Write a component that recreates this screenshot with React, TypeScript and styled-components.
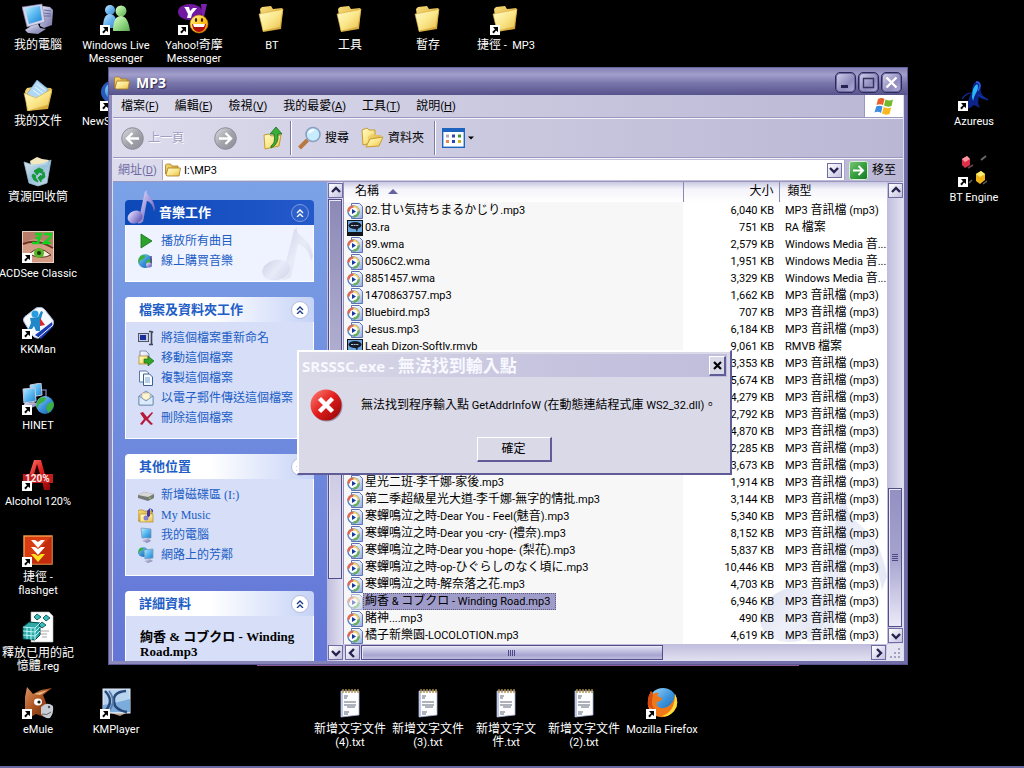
import React from 'react';
import styled, { createGlobalStyle, css } from 'styled-components';

const sans = `Roboto, "Noto Sans CJK TC", "Noto Sans CJK JP", sans-serif`;
const serif = `"Liberation Serif", "Noto Sans CJK TC", "Noto Sans CJK JP", serif`;

const Global = createGlobalStyle`
  * { box-sizing: border-box; }
  html, body { margin: 0; padding: 0; background: #000; }
  body { font-family: ${sans}; font-size: 11px; line-height: 13px; color: #000; }
  button, input { font: inherit; color: inherit; margin: 0; }
  button { padding: 0; border: 0; background: none; }
  svg { display: block; flex: none; }
`;

/* ---------- text ---------- */

const Han = styled.span<{ $size: number }>`
  font-size: ${p => p.$size}px;
  line-height: 1;
`;

/* Ideographs and kana are set one step larger than the Latin text round them. */
function T({ children, size = 12 }: { children: string; size?: number }) {
  const runs = children.split(/([\u2e80-\u9fff\uff00-\uffef]+)/).filter(Boolean);
  return (
    <>
      {runs.map((run, i) =>
        /[\u2e80-\u9fff\uff00-\uffef]/.test(run) ? <Han key={i} $size={size}>{run}</Han> : run,
      )}
    </>
  );
}

/* ---------- drawings ---------- */

const HiddenDefs = styled.svg`
  position: absolute;
  width: 0;
  height: 0;
`;

function Grad({ id, stops, v }: { id: string; stops: string[]; v?: boolean }) {
  return (
    <linearGradient id={id} x1="0" y1="0" x2={v ? 0 : 1} y2="1">
      {stops.map((s, i) => <stop key={i} offset={i / (stops.length - 1)} stopColor={s} />)}
    </linearGradient>
  );
}

function Defs() {
  return (
    <HiddenDefs aria-hidden="true">
      <defs>
        <Grad id="gFolder" stops={['#fffbd0', '#fbe88c', '#e8bc48']} />
        <Grad id="gFolderBack" stops={['#f7dc78', '#cf9c2c']} />
        <Grad id="gScreen" stops={['#bfeeff', '#58b8f0', '#1c7fd0']} />
        <Grad id="gCase" stops={['#f4f4ff', '#a6a6cc', '#7474a4']} />
        <Grad id="gBlue" stops={['#a4dcff', '#3c94dc', '#1858a4']} />
        <Grad id="gBuddyBlue" stops={['#c8e8ff', '#68b4f0', '#3c84cc']} />
        <Grad id="gBuddyGreen" stops={['#e0fcd0', '#98dc88', '#58a850']} />
        <Grad id="gRed" stops={['#ff8478', '#e01c1c', '#8c0404']} />
        <Grad id="gGray" stops={['#dcdce0', '#a4a4ac', '#8c8c94']} />
        <Grad id="gNote" stops={['#f0ecff', '#a098dc', '#4c44a0']} />
        <Grad id="gPaleNote" stops={['#cdd2ea', '#e8ebf7', '#cfd5ec']} />
        <Grad id="gPage" stops={['#ffffff', '#dfe6fa', '#8ca4dc']} />
        <Grad id="gYellow" stops={['#fff8a0', '#ffc820', '#f08808']} />
        <Grad id="gGo" stops={['#7cc878', '#38a040', '#187828']} />
        <Grad id="gBin" stops={['#f4fcff', '#a4d0ec', '#d8f0fc']} />
        <Grad id="gDonkey" stops={['#dc9460', '#a85020', '#5c2408']} />
      </defs>
    </HiddenDefs>
  );
}

const ShortcutMark = () => (
  <g>
    <rect x="0" y="22" width="10" height="10" fill="#fff" />
    <path d="M3 24h5v5l-2-1.6-2.2 3.1-1.6-1.4L5 26.2z" fill="#000" />
  </g>
);

function Big({ children, link }: { children: React.ReactNode; link?: boolean }) {
  return (
    <svg width="32" height="32" viewBox="0 0 32 32" aria-hidden="true">
      {children}
      {link && <ShortcutMark />}
    </svg>
  );
}

const FolderArt = () => (
  <g>
    <path d="M4 6l2-2 9-1 2 3 9-1 1 2-2 19-18 3z" fill="url(#gFolderBack)" />
    <path d="M3 11l21-4 3-1-3 18-17 4z" fill="url(#gFolder)" stroke="#d8ac40" strokeWidth=".6" />
  </g>
);

const ComputerArt = () => (
  <g>
    <path d="M20 3l8 1 3 3-1 15-8 3-4-2z" fill="url(#gCase)" />
    <path d="M22 7l7 1M22 10l7 1M22 13l7 0" stroke="#6868a0" strokeWidth="1" />
    <path d="M0 4l20-3 3 18-18 5z" fill="#d4d4ec" stroke="#7878a8" strokeWidth=".6" />
    <path d="M3 5l15-2 2 14-13 4z" fill="url(#gScreen)" />
    <path d="M9 23l7-2 2 4 6 1-8 5-10-1-3-3z" fill="url(#gCase)" />
  </g>
);

const GlobeArt = ({ x, y, r }: { x: number; y: number; r: number }) => (
  <g transform={`translate(${x} ${y}) scale(${r / 8})`}>
    <circle r="8" fill="url(#gBlue)" />
    <path d="M-5-6q4-2 6 0l-2 3-4 2-2 4q-2-4 2-9zM2-1l5-2q2 4-1 7l-3 3-2-4z" fill="#3cb03c" />
  </g>
);

const art: Record<string, React.ReactNode> = {
  computer: <Big><ComputerArt /></Big>,
  documents: (
    <Big>
      <path d="M3 12l2-3 6-1 18 1 1 4-4 17-21 2z" fill="url(#gFolderBack)" />
      <path d="M15 1l11 9-7 15-14-10z" fill="#b0d8f4" stroke="#7ca8d4" strokeWidth=".6" />
      <path d="M15 5l8 6M13 8l8 6M11 11l8 6" stroke="#e8f8ff" strokeWidth="1" />
      <path d="M2 14l12 5 16-9-4 16-20 6z" fill="url(#gFolder)" stroke="#d8ac40" strokeWidth=".6" />
    </Big>
  ),
  bin: (
    <Big>
      <path d="M8 6l7-4 5 2 7 1-2 5-16 1z" fill="#f4e8c0" />
      <path d="M2 7l9 3 10-1 8-4-4 23-9 3-9-3z" fill="url(#gBin)" stroke="#a8cce4" strokeWidth=".8" opacity=".93" />
      <path d="M12 16l5-3 4 2-1 3-3-1-2 3zM22 17l1 5-4 3v2l-3-4 3-3v2l2-2-1-2zM11 19l3 2-1 1 2 3 1 2-4-2-2-4z" fill="#18983c" stroke="#18983c" />
    </Big>
  ),
  acdsee: (
    <Big link>
      <rect x=".5" y=".5" width="31" height="31" fill="#b87c68" stroke="#e8d0c0" />
      <path d="M1 12q14-9 30 3v16H1z" fill="#d49c84" />
      <path d="M1 13q14-6 30 4" stroke="#6c3424" strokeWidth="2" fill="none" />
      <path d="M7 23q10-10 22 1-10 5-22-1z" fill="#f4f0dc" stroke="#5c3020" />
      <circle cx="17" cy="22" r="5" fill="#58b428" />
      <circle cx="17" cy="22" r="2" fill="#143808" />
      <path d="M13 3h6l-1.500 4h-4h4L16 12h-6M22 3h7l-1 4-6 5h7" stroke="#10d420" strokeWidth="2.400" fill="none" />
    </Big>
  ),
  kkman: (
    <Big link>
      <path d="M14 1q6-2 9 2l8 10q2 5-3 8l-9 9q-5 3-9-2L2 15q-2-4 3-7z" fill="#f4f8ff" stroke="#a8b8dc" />
      <path d="M13 28L30 15l1 5-12 12z" fill="#1c3cb4" />
      <path d="M16 31l15-13" stroke="#fff" strokeWidth="1" />
      <circle cx="13" cy="7" r="3.500" fill="#289cdc" />
      <path d="M8 11l8-1 3-6 2 1-3 10v9h-4l-2-5-4 6-2-2 3-7z" fill="#2088c8" />
      <path d="M18 11l5 7-5 1z" fill="#d42828" />
    </Big>
  ),
  hinet: (
    <Big link>
      <path d="M8 2l11-2 1 12-11 2z" fill="url(#gScreen)" stroke="#c8c8e0" />
      <path d="M1 6l12-1 1 13-12 2z" fill="url(#gScreen)" stroke="#c8c8e0" />
      <path d="M3 20l9-1 5 3-8 3-8-2z" fill="url(#gCase)" />
      <path d="M20 7h4v8" stroke="#7070a0" strokeWidth="1.500" fill="none" />
      <GlobeArt x={23} y={22} r={9} />
    </Big>
  ),
  alcohol: (
    <Big link>
      <path d="M12 1h7l6 22 3 2v6h-6l-2-10h-8l-3 7H3l2-5z" fill="url(#gRed)" />
      <path d="M15 5l-3 10h6z" fill="#200" />
      <rect x="1" y="15" width="30" height="9" fill="#c01c1c" />
      <text x="3" y="23" fontSize="10" fontWeight="700" fontFamily="Roboto, sans-serif" fill="#ffe8e8">120%</text>
    </Big>
  ),
  flashget: (
    <Big link>
      <rect x="2" y="1" width="28" height="28" fill="#d83c10" stroke="#f8a050" strokeWidth="1.400" />
      <path d="M2 29L30 1v28z" fill="#b42008" opacity=".6" />
      <path d="M9 5h4l3 2 3-2h4l-7 8zM9 12h4l3 2 3-2h4l-7 8z" fill="#fff" />
      <path d="M9 19h4l3 2 3-2h4l-7 8z" fill="#ffe020" />
    </Big>
  ),
  reg: (
    <Big>
      <path d="M9 1h18l4 4v26H9z" fill="#fff" stroke="#b8b8b8" strokeWidth=".6" />
      <path d="M19 20h8M18 23h7M20 26h5" stroke="#a8a8a8" />
      <path d="M1 16l6-5 11 1v12l-5 5-12-1z" fill="#30a8a8" stroke="#044" />
      <path d="M1 16l12 1 5-5M13 17v12M1 20l12 1 5-5M1 24l12 1 5-5M5 16v12M9 17v12" stroke="#c4fcfc" fill="none" strokeWidth=".9" />
      <path d="M15 3l4 3-4 3-3-3zM24 4l4 3-4 3-3-3zM20 11l4 3-4 3-3-3z" fill="#38bcbc" stroke="#044" strokeWidth=".8" />
    </Big>
  ),
  emule: (
    <Big link>
      <path d="M3 10L5 0l6 7 8-4 11-2-9 7 4 10-3 12-8-3-7 4-4-7z" fill="url(#gDonkey)" />
      <path d="M12 7l14-4-8 5z" fill="#e8b888" />
      <ellipse cx="16" cy="15" rx="4" ry="3.400" fill="#fff" />
      <circle cx="17" cy="15" r="1.600" fill="#111" />
      <path d="M19 20q6-6 12-1 1 7-3 12-5 1-9-4z" fill="#c8ccd4" />
      <circle cx="27" cy="20" r="1.200" fill="#555" />
      <path d="M20 27q5 2 9-2" stroke="#666" fill="none" />
    </Big>
  ),
  kmplayer: (
    <Big link>
      <path d="M8 25l20 0-8 4z" fill="#b8a088" />
      <rect x="3" y="2" width="27" height="24" fill="#b8d4ee" stroke="#e4ecf8" />
      <path d="M3 25h27V12q-14 4-27 6z" fill="#7cacdc" />
      <path d="M5 4q10 10 0 20M26 4q-13 1-12 10 0 9 13 11" stroke="#284878" strokeWidth="2.400" fill="none" />
      <path d="M9 4q8 10 0 20" stroke="#587ca8" strokeWidth="1.600" fill="none" />
    </Big>
  ),
  wlm: (
    <Big link>
      <circle cx="10" cy="7" r="5" fill="url(#gBuddyBlue)" />
      <path d="M3 25q0-14 7-14t7 14z" fill="url(#gBuddyBlue)" />
      <circle cx="21" cy="8" r="5.500" fill="url(#gBuddyGreen)" />
      <path d="M13 28q0-15 8-15 7 0 9 15z" fill="url(#gBuddyGreen)" />
    </Big>
  ),
  yahoo: (
    <Big link>
      <ellipse cx="12" cy="9" rx="12" ry="8" fill="#7018a0" />
      <path d="M23 1h6l-3 13h-2z" fill="#7c20b0" />
      <path d="M6 4h5l1 4 3-3h4l-5 6-1 4H9l1-4-3-6z" fill="#fff" />
      <circle cx="21" cy="21" r="9" fill="url(#gYellow)" stroke="#c87808" strokeWidth=".6" />
      <ellipse cx="18" cy="17" rx="1.200" ry="2" fill="#402000" />
      <ellipse cx="24" cy="17" rx="1.200" ry="2" fill="#402000" />
      <path d="M14 21h14q-1 8-7 8t-7-8z" fill="#b01010" />
      <path d="M15 21h12l-1 3H16z" fill="#fff" />
    </Big>
  ),
  folder: <Big><FolderArt /></Big>,
  folderLink: <Big link><FolderArt /></Big>,
  news: (
    <Big link>
      <circle cx="12" cy="13" r="11" fill="#2858b8" />
      <circle cx="13" cy="12" r="8" fill="url(#gBlue)" />
    </Big>
  ),
  azureus: (
    <Big link>
      <path d="M8 30q2-10 6-17 0-9 5-11 4 0 4 6-2 6 5 12l2 1-6-1-3-2q-2 6 1 11l-6-3-4 3z" fill="#0c2488" />
      <path d="M14 18q0-10 5-13 2 2 0 7-3 5-4 10z" fill="#28b8f8" />
      <path d="M18 3q4 0 4 4l-2 5" stroke="#3860e8" fill="none" strokeWidth="1.400" />
      <path d="M4 20q4-6 9-6M20 16q6 2 10 5" stroke="#1434b0" fill="none" strokeWidth="1.200" />
    </Big>
  ),
  bt: (
    <Big link>
      <path d="M4 4l5-3 3 3v6l-5 3-3-3z" fill="#dc3048" />
      <path d="M4 4l5-3 3 3-5 3z" fill="#ff98a4" />
      <path d="M10 13l5-3" stroke="#684048" strokeWidth="2" />
      <path d="M18 19l5-3 4 3v6l-5 4-4-3z" fill="#f0b418" />
      <path d="M18 19l5-3 4 3-5 3z" fill="#fff070" />
      <path d="M23 5l5-4" stroke="#686868" strokeWidth="2" />
      <path d="M11 28l3-3M25 29l4-3" stroke="#606060" strokeWidth="1.500" />
    </Big>
  ),
  text: (
    <Big>
      <path d="M7 4h18v24l-18 2z" fill="#fdfdff" stroke="#a8b0d0" strokeWidth=".8" />
      <path d="M7 4v26l2-1V5z" fill="#c0c8e8" />
      <path d="M9 2v4M12 2v4M15 2v4M18 2v4M21 2v4M24 2v4" stroke="#b09048" strokeWidth="1.400" />
      <path d="M10 9h4M10 11h3M10 15h12M10 18h12M13 20h8M10 25h5M10 27h4" stroke="#606878" strokeWidth="1" />
    </Big>
  ),
  firefox: (
    <Big link>
      <circle cx="17" cy="15" r="14" fill="url(#gBlue)" />
      <path d="M29 7q5 10-1 17-6 7-14 6Q4 29 2 19q-1-8 3-15l2 3q3-2 6-1l-2 3 5 2q0 3-5 4-1 5 4 6 5 1 9-3 5-5 5-11z" fill="#f07818" />
      <path d="M29 7q5 10-1 17-6 7-12 5 13-4 13-22z" fill="#ffdc38" />
      <path d="M2 19q-1-8 3-15l2 3-1 6q-1 6 4 11z" fill="#d84c10" />
    </Big>
  ),
};

function Small({ children, size = 16 }: { children: React.ReactNode; size?: number }) {
  return <svg width={size} height={size} viewBox="0 0 16 16" aria-hidden="true">{children}</svg>;
}

const SmallFolder = () => (
  <Small>
    <path d="M.500 12V3l1-1h4l1.500 2h6v3H4z" fill="url(#gFolderBack)" stroke="#a87c20" strokeWidth=".8" />
    <path d="M1 13l2-7h12.500l-1.500 8H2z" fill="url(#gFolder)" stroke="#a87c20" strokeWidth=".8" />
  </Small>
);

const small: Record<string, React.ReactNode> = {
  play: <Small><path d="M3 1l11 7-11 7z" fill="#2ca42c" stroke="#146c18" strokeWidth=".8" /></Small>,
  shop: (
    <Small>
      <GlobeArt x={7} y={8} r={7} />
      <path d="M13 3v8" stroke="#503c98" strokeWidth="1.400" />
      <ellipse cx="11" cy="12" rx="3" ry="2.500" fill="url(#gNote)" />
    </Small>
  ),
  rename: (
    <Small>
      <rect x=".5" y="3.500" width="10" height="8" fill="#c8ccdc" stroke="#505468" />
      <rect x="2" y="5" width="6" height="5" fill="#18309c" />
      <path d="M11 1.500h2l1 1 1-1M13.500 2v12M11 14.500h4" stroke="#404458" fill="none" strokeWidth="1.600" />
    </Small>
  ),
  move: (
    <Small>
      <path d="M2 1h6l3 3v8H2z" fill="url(#gPage)" stroke="#7078a0" strokeWidth=".8" />
      <rect x="1" y="6" width="9" height="8" fill="url(#gFolder)" stroke="#a88020" strokeWidth=".7" />
      <path d="M6 9h4V6l6 5-6 5v-3H6z" fill="#30a428" stroke="#146010" strokeWidth=".6" />
    </Small>
  ),
  copy: (
    <Small>
      <path d="M1.500 1h7l2 2v9h-9z" fill="#fff" stroke="#5878a8" />
      <path d="M5.500 4h6l3 3v8.500h-9z" fill="#f4faff" stroke="#3c6090" />
      <path d="M7 8h5M7 10h5M7 12h5" stroke="#78a4d4" />
    </Small>
  ),
  mail: (
    <Small>
      <path d="M1 6l7-5 7 5v9H1z" fill="#b8d4f0" stroke="#6888b0" strokeWidth=".8" />
      <path d="M4 3h8v7H4z" fill="#fff4d0" stroke="#b09860" strokeWidth=".5" />
      <path d="M1 6l7 5 7-5v9H1z" fill="#dcecfc" stroke="#6888b0" strokeWidth=".8" />
    </Small>
  ),
  remove: <Small><path d="M2 3l3-1 4 5 5-5 1 1-5 6 5 5-2 1-5-5-4 5-2-1 4-5z" fill="#b81838" /></Small>,
  disk: (
    <Small>
      <path d="M0 8l6-3 10 2v4l-6 3-10-3z" fill="#787878" />
      <path d="M0 8l6-3 10 2-6 3z" fill="#d8d8d8" />
      <circle cx="12" cy="11" r="1" fill="#7c4" />
    </Small>
  ),
  music: (
    <Small>
      <path d="M0 4l1-1h4l1 1h8v10H0z" fill="url(#gFolderBack)" stroke="#a07818" strokeWidth=".6" />
      <rect x="2" y="7" width="13" height="8" fill="url(#gFolder)" stroke="#a88020" strokeWidth=".6" />
      <path d="M12 1v8l-3 2V4zM12 1l3 2v3" fill="#40389c" />
      <circle cx="8" cy="11" r="2.500" fill="#8880d0" />
    </Small>
  ),
  pc: (
    <Small>
      <path d="M3 1l10 1v9L4 11z" fill="url(#gScreen)" stroke="#8098c0" strokeWidth=".8" />
      <path d="M7 11h3l3 3-4 2-5-2z" fill="url(#gCase)" />
    </Small>
  ),
  net: (
    <Small>
      <GlobeArt x={5} y={5} r={5} />
      <path d="M6 3l9-1v9l-8 1z" fill="url(#gScreen)" stroke="#8098c0" strokeWidth=".8" />
      <path d="M9 12h3l3 2-5 2-4-2z" fill="url(#gCase)" />
    </Small>
  ),
  audio: (
    <Small>
      <path d="M4.500.5h8l3 3v12h-11z" fill="url(#gPage)" stroke="#5c74b4" />
      <circle cx="6.500" cy="8.500" r="5.500" fill="#f8fcff" stroke="#5c84c4" strokeWidth="1.400" />
      <path d="M1.500 8.500a5 5 0 0 1 5-5" stroke="#e06850" strokeWidth="2.400" fill="none" />
      <path d="M6.500 3.500a5 5 0 0 1 5 5" stroke="#f0d060" strokeWidth="1.800" fill="none" />
      <path d="M6.500 13.500a5 5 0 0 0 5-5" stroke="#68b058" strokeWidth="2.400" fill="none" />
      <path d="M5 6l4 2.500L5 11z" fill="#1838a0" />
    </Small>
  ),
  real: (
    <Small>
      <rect width="16" height="16" fill="#101418" />
      <rect x="1" y="1" width="14" height="11" fill="#6ca8e0" />
      <ellipse cx="8" cy="5.500" rx="6.500" ry="3.500" fill="#181c28" />
      <path d="M8 8l3 0-1 4z" fill="#181c28" />
      <path d="M4 5.500h8" stroke="#b8c8d8" strokeDasharray="2 .600" />
    </Small>
  ),
};

const Note = ({ w, h, fill }: { w: number; h: number; fill: string }) => (
  <svg width={w} height={h} viewBox="0 0 52 54" preserveAspectRatio="none" aria-hidden="true">
    <path d="M36 0q-1 5 4 9 10 7 12 20l-2 5q-2-13-13-17L30 50q-5 4-10 3l4-14L33 3z" fill={fill} />
    <ellipse cx="15" cy="43" rx="14" ry="10" transform="rotate(-14 15 43)" fill={fill} />
  </svg>
);

const Chevron = ({ dir }: { dir: 'up' | 'down' | 'left' | 'right' }) => {
  const d = { up: 'M1 6l4-4 4 4', down: 'M1 3l4 4 4-4', left: 'M6 1L2 5l4 4', right: 'M3 1l4 4-4 4' }[dir];
  return (
    <svg width="10" height="10" viewBox="0 0 10 10" aria-hidden="true">
      <path d={d} fill="none" stroke="#25234f" strokeWidth="2.400" />
    </svg>
  );
};

/* ---------- desktop ---------- */

const Desktop = styled.main`
  position: relative;
  min-height: 100vh;
  overflow: hidden;
  background: #000;
  border-bottom: 2px solid #6c6aa4;
`;

const IconGrid = styled.div`
  display: grid;
  grid-template-columns: repeat(13, 78px);
  grid-auto-rows: 76px;
  margin-left: -1px;
`;

const Shortcut = styled.button<{ $col: number; $row: number; $start?: boolean }>`
  grid-column: ${p => p.$col + 1};
  grid-row: ${p => p.$row + 1};
  display: flex;
  flex-direction: column;
  align-items: center;
  gap: 4px;
  padding-top: 3px;
  color: #fff;
  white-space: pre;
  text-align: center;
  ${p => p.$start && css`
    span { align-self: flex-start; margin-left: 5px; }
  `}
`;

type Item = [string, string, number, number];
const shortcuts: Item[] = [
  ['computer', '我的電腦', 0, 0],
  ['wlm', 'Windows Live\nMessenger', 1, 0],
  ['yahoo', 'Yahoo!奇摩\nMessenger', 2, 0],
  ['folder', 'BT', 3, 0],
  ['folder', '工具', 4, 0],
  ['folder', '暫存', 5, 0],
  ['folderLink', '捷徑 -  MP3', 6, 0],
  ['documents', '我的文件', 0, 1],
  ['news', 'NewS', 1, 1],
  ['azureus', 'Azureus', 12, 1],
  ['bin', '資源回收筒', 0, 2],
  ['bt', 'BT Engine', 12, 2],
  ['acdsee', 'ACDSee Classic', 0, 3],
  ['kkman', 'KKMan', 0, 4],
  ['hinet', 'HINET', 0, 5],
  ['alcohol', 'Alcohol 120%', 0, 6],
  ['flashget', '捷徑 -\nflashget', 0, 7],
  ['reg', '釋放已用的記\n憶體.reg', 0, 8],
  ['emule', 'eMule', 0, 9],
  ['kmplayer', 'KMPlayer', 1, 9],
  ['text', '新增文字文件\n(4).txt', 4, 9],
  ['text', '新增文字文件\n(3).txt', 5, 9],
  ['text', '新增文字文\n件.txt', 6, 9],
  ['text', '新增文字文件\n(2).txt', 7, 9],
  ['firefox', 'Mozilla Firefox', 8, 9],
];

/* ---------- explorer window ---------- */

const Explorer = styled.section`
  position: absolute;
  inset: 67px 116px 101px 108px;
  display: flex;
  flex-direction: column;
  overflow: hidden;
  border: solid #5b5894;
  border-width: 0 1px 1px;
  background: linear-gradient(90deg, #8c89bc, #6f6ca6);
`;

const BehindEdge = styled.div`
  position: absolute;
  left: 257px;
  right: 225px;
  bottom: 100px;
  height: 1px;
  background: #8a5a9c;
`;

const Caption = styled.header`
  display: flex;
  align-items: center;
  gap: 6px;
  height: 28px;
  padding: 2px 5px 0;
  border-top: 1px solid #66639c;
  background: linear-gradient(#8683b6, #a19ecb 25%, #7a77ad 55%, #56538c);
  color: #fff;
`;

const CaptionText = styled.h1`
  flex: 1;
  margin: 0;
  font: 700 14px/20px "Open Sans", sans-serif;
  text-shadow: 1px 1px 1px #2c2a58;
`;

const CaptionButton = styled.button`
  display: grid;
  place-items: center;
  width: 21px;
  height: 21px;
  margin-left: -4px;
  border: 1px solid #2c2a58;
  border-radius: 5px;
  box-shadow: inset 0 0 0 1px #6c69a0;
  background: linear-gradient(135deg, #d4d2ec, #8f8cbe 60%, #b3b0da);
`;

const Frame = styled.div`
  flex: 1;
  min-height: 0;
  display: flex;
  flex-direction: column;
  margin: 0 3px 3px;
  border: solid #dddcf0;
  border-width: 0 1px 0;
`;

const bar = css`
  display: flex;
  align-items: center;
  flex: none;
  background: linear-gradient(90deg, #dddced, #cbcae0 45%, #b9b7d4);
`;

const MenuBar = styled.nav`
  ${bar}
  height: 23px;
  border-bottom: 1px solid #9997bf;
`;

const MenuButton = styled.button`
  padding: 0 8px;
  height: 22px;
`;

const FlagBox = styled.div`
  display: grid;
  place-items: center;
  align-self: stretch;
  width: 39px;
  margin-left: auto;
  background: #fff;
  border-left: 1px solid #9997bf;
`;

const ToolBar = styled.div`
  ${bar}
  height: 40px;
  padding: 0 8px;
  border-top: 1px solid #f4f4fb;
  border-bottom: 1px solid #9997bf;
`;

const Tool = styled.button<{ $off?: boolean; $w: number }>`
  display: flex;
  align-items: center;
  gap: 4px;
  width: ${p => p.$w}px;
  flex: none;
  ${p => p.$off && css`
    color: #a09ec4;
    text-shadow: 1px 1px 0 #fff;
  `}
`;

const Divider = styled.div`
  width: 2px;
  height: 34px;
  margin-right: 6px;
  border-left: 1px solid #7f7caa;
  border-right: 1px solid #fff;
`;

const AddressBar = styled.form`
  ${bar}
  height: 24px;
  padding: 0 7px 0 5px;
  border-top: 1px solid #f4f4fb;
  border-bottom: 1px solid #9997bf;
  label { width: 44px; color: #6f6ca4; }
`;

const AddressBox = styled.div`
  flex: 1;
  display: flex;
  align-items: center;
  gap: 3px;
  height: 20px;
  padding: 0 2px;
  background: #fff;
  border: solid #a9a7cb;
  border-width: 0 1px;
  input { flex: 1; min-width: 0; padding: 0; border: 0; outline: 0; background: none; }
`;

const GoButton = styled.button`
  display: flex;
  align-items: center;
  gap: 4px;
  margin-left: 4px;
`;

const Body = styled.div`
  flex: 1;
  min-height: 0;
  display: flex;
`;

/* ---------- scroll bars ---------- */

const ScrollBar = styled.div<{ $h?: boolean }>`
  flex: none;
  display: flex;
  flex-direction: ${p => (p.$h ? 'row' : 'column')};
  ${p => (p.$h ? 'height: 17px' : 'width: 16px')};
  padding: 1px;
  gap: 1px;
  background: linear-gradient(${p => (p.$h ? '180deg' : '90deg')}, #bfbddc, #e2e1f1);
`;

const ScrollButton = styled.button`
  display: grid;
  place-items: center;
  flex: none;
  width: 15px;
  height: 15px;
  border: 1px solid #6f6ca4;
  background: linear-gradient(135deg, #fff, #c3c1e0);
`;

const Thumb = styled.div`
  display: grid;
  place-items: center;
  border: 1px solid #504d88;
  box-shadow: inset 1px 1px 0 #e8e8f8;
`;

const SideThumb = styled(Thumb)`flex: 0 1 380px; background: linear-gradient(180deg, #8c89b6, #d8d7eb 85%);`;
const ListThumb = styled(Thumb)`flex: 0 0 139px; background: linear-gradient(180deg, #9390c2, #a5a3cd 50%, #eceaf7);`;
const WideThumb = styled(Thumb)`flex: 0 1 302px; background: linear-gradient(180deg, #e4e3f4, #a7a5d0 70%, #bdbbdc);`;
const Space = styled.div`flex: 1;`;

const Grip = ({ turn }: { turn?: boolean }) => (
  <svg width="8" height="8" viewBox="0 0 8 8" aria-hidden="true">
    <path d={turn ? 'M.5 1v6M2.500 1v6M4.500 1v6M6.500 1v6' : 'M1 .5h6M1 2.500h6M1 4.500h6M1 6.500h6'} stroke="#4c4984" />
  </svg>
);

/* ---------- task pane ---------- */

const TaskPane = styled.aside`
  flex: none;
  display: flex;
  flex-direction: column;
  gap: 15px;
  width: 214px;
  padding: 18px 13px 0 12px;
  overflow: hidden;
  background: linear-gradient(#7ba2e7, #6375d6);
  font-family: ${serif};
  font-size: 12px;
`;

const Panel = styled.section`
  flex: none;
`;

const PanelHead = styled.header<{ $main?: boolean }>`
  display: flex;
  align-items: center;
  height: 25px;
  padding: 0 5px 0 ${p => (p.$main ? 2 : 14)}px;
  border-radius: 4px 4px 0 0;
  color: ${p => (p.$main ? '#fff' : '#215dc6')};
  background: ${p => (p.$main ? 'linear-gradient(90deg, #0c48b8, #2459ca)' : 'linear-gradient(90deg, #fff 45%, #c6d3f7)')};
  h2 { flex: 1; margin: 0; font-size: 12px; line-height: 16px; font-weight: 700; }
`;

const HeadNote = styled.div`
  width: 32px;
  margin-top: -12px;
`;

const Fold = styled.button<{ $main?: boolean }>`
  display: grid;
  place-items: center;
  width: 18px;
  height: 18px;
  border-radius: 50%;
  border: 1px solid ${p => (p.$main ? '#7c9ce4' : '#b4bcdc')};
  background: ${p => (p.$main ? '#2c5fc8' : '#fff')};
  color: ${p => (p.$main ? '#fff' : '#1c3c8c')};
`;

const PanelBody = styled.div<{ $main?: boolean }>`
  position: relative;
  padding: 6px 0 10px 12px;
  border: 1px solid #fff;
  border-top: 0;
  background: ${p => (p.$main ? '#eff3ff' : '#d6dff7')};
`;

const TaskLink = styled.a`
  position: relative;
  z-index: 1;
  display: flex;
  align-items: center;
  gap: 7px;
  height: 20px;
  color: #215dc6;
  text-decoration: none;
  white-space: nowrap;
`;

const PanelMark = styled.div`
  position: absolute;
  right: 0;
  bottom: 0;
`;

const Details = styled.div`
  height: 60px;
  padding: 7px 4px 0 2px;
  font-weight: 700;
  font-size: 13px;
  line-height: 15px;
`;

function TaskPanel({ title, items, main, children }: {
  title: string; items?: [string, string][]; main?: boolean; children?: React.ReactNode;
}) {
  return (
    <Panel>
      <PanelHead $main={main}>
        {main && <HeadNote><Note w={28} h={34} fill="url(#gNote)" /></HeadNote>}
        <h2><T size={13}>{title}</T></h2>
        <Fold $main={main} aria-label={`收合${title}`}>
          <svg width="8" height="8" viewBox="0 0 8 8" aria-hidden="true">
            <path d="M1 4l3-3 3 3M1 8l3-3 3 3" fill="none" stroke="currentColor" strokeWidth="1.400" />
          </svg>
        </Fold>
      </PanelHead>
      <PanelBody $main={main}>
        {main && <PanelMark><Note w={52} h={54} fill="url(#gPaleNote)" /></PanelMark>}
        {items?.map(([icon, label]) => (
          <TaskLink key={label} href="#">{small[icon]}<span><T>{label}</T></span></TaskLink>
        ))}
        {children}
      </PanelBody>
    </Panel>
  );
}

/* ---------- file list ---------- */

const ListPane = styled.div`
  flex: 1;
  min-width: 0;
  display: flex;
  flex-direction: column;
`;

const ListRow = styled.div`
  flex: 1;
  min-height: 0;
  display: flex;
`;

const ListView = styled.div`
  position: relative;
  flex: 1;
  min-width: 0;
  overflow: hidden;
  background: #fff;
  border-left: 1px solid #9290bb;
`;

const ListMark = styled.div`
  position: absolute;
  right: 0;
  bottom: 0;
  opacity: 0.7;
`;

const Files = styled.table`
  position: relative;
  width: 100%;
  table-layout: fixed;
  border-collapse: collapse;
  th, td { padding: 0; overflow: hidden; white-space: nowrap; font-weight: 400; text-align: left; }
  th {
    height: 20px;
    padding: 0 0 1px 8px;
    border-left: 1px solid #8a88b4;
    background: linear-gradient(#c9c8e2, #f3f3fa 35%, #fff);
  }
  th:first-child { padding-left: 11px; border-left: 0; }
  td { height: 17px; line-height: 17px; }
  td:first-child { background: #f7f7f7; }
  td:last-child { padding-left: 6px; }
  th.size, td.size { text-align: right; padding-right: 5px; }
`;

const NameCell = styled.div`
  display: flex;
  height: 17px;
  align-items: center;
  padding-left: 3px;
`;

const FileName = styled.span<{ $on?: boolean }>`
  height: 17px;
  padding: 0 2px;
  ${p => p.$on && css`
    padding-right: 6px;
    background: #9f9cca;
    outline: 1px dotted #5c5a78;
    outline-offset: -1px;
  `}
`;

const IconSlot = styled.span<{ $on?: boolean }>`
  opacity: ${p => (p.$on ? 0.5 : 1)};
`;

const SortMark = styled.svg`
  display: inline-block;
  margin-left: 9px;
  vertical-align: 1px;
`;

const Corner = styled.div`
  display: grid;
  place-items: center;
  flex: none;
  width: 16px;
  background: #e4e3f1;
`;

const HBar = styled.div`
  display: flex;
  flex: none;
`;

const HScroll = styled(ScrollBar)`flex: 1; min-width: 0; padding-left: 2px;`;

const MP3 = 'MP3 音訊檔 (mp3)';
const WMA = 'Windows Media 音...';
const files: [string, string, string][] = [
  ['02.甘い気持ちまるかじり.mp3', '6,040', MP3],
  ['03.ra', '751', 'RA 檔案'],
  ['89.wma', '2,579', WMA],
  ['0506C2.wma', '1,951', WMA],
  ['8851457.wma', '3,329', WMA],
  ['1470863757.mp3', '1,662', MP3],
  ['Bluebird.mp3', '707', MP3],
  ['Jesus.mp3', '6,184', MP3],
  ['Leah Dizon-Softly.rmvb', '9,061', 'RMVB 檔案'],
  ['', '3,353', MP3],
  ['', '5,674', MP3],
  ['', '4,279', MP3],
  ['', '2,792', MP3],
  ['', '4,870', MP3],
  ['', '2,285', MP3],
  ['', '3,673', MP3],
  ['星光二班-李千娜-家後.mp3', '1,914', MP3],
  ['第二季超級星光大道-李千娜-無字的情批.mp3', '3,144', MP3],
  ['寒蟬鳴泣之時-Dear You - Feel(魅音).mp3', '5,340', MP3],
  ['寒蟬鳴泣之時-Dear you -cry- (禮奈).mp3', '8,152', MP3],
  ['寒蟬鳴泣之時-Dear you -hope- (梨花).mp3', '5,837', MP3],
  ['寒蟬鳴泣之時-op-ひぐらしのなく頃に.mp3', '10,446', MP3],
  ['寒蟬鳴泣之時-解奈落之花.mp3', '4,703', MP3],
  ['絢香 & コブクロ - Winding Road.mp3', '6,946', MP3],
  ['賭神....mp3', '490', MP3],
  ['橘子新樂園-LOCOLOTION.mp3', '4,619', MP3],
];

/* ---------- error dialog ---------- */

const Dialog = styled.div`
  position: absolute;
  left: 297px;
  top: 350px;
  width: 435px;
  padding: 3px;
  background: #dad9e8;
  border: solid;
  border-width: 1px 2px 2px 1px;
  border-color: #fff #5f5c98 #5f5c98 #fff;
  box-shadow: inset 1px 1px 0 #fff;
`;

const DialogTitle = styled.header`
  display: flex;
  align-items: center;
  height: 23px;
  padding: 0 1px;
  background: linear-gradient(90deg, #dad9e8, #c5c3de 60%, #c0bedb);
  color: #f8f8ff;
  h2 { flex: 1; margin: 0; font: 700 15px/20px "Open Sans", "Noto Sans CJK TC", sans-serif; white-space: nowrap; }
`;

const raised = css`
  display: grid;
  place-items: center;
  background: #dad9e8;
  border: solid;
  border-width: 1px 2px 2px 1px;
  border-color: #fff #5f5c98 #5f5c98 #fff;
`;

const CloseButton = styled.button`
  ${raised}
  width: 17px;
  height: 20px;
`;

const Message = styled.div`
  display: flex;
  align-items: center;
  gap: 18px;
  padding: 12px 9px 15px;
  p { margin: 0; white-space: nowrap; }
`;

const OkButton = styled.button`
  ${raised}
  width: 75px;
  height: 25px;
  margin: 0 auto 8px;
`;

const menus = [['檔案', 'F'], ['編輯', 'E'], ['檢視', 'V'], ['我的最愛', 'A'], ['工具', 'T'], ['說明', 'H']];

const RoundArrow = ({ flip }: { flip?: boolean }) => (
  <svg width="23" height="23" viewBox="0 0 23 23" aria-hidden="true">
    <circle cx="11.500" cy="11.500" r="10.800" fill="url(#gGray)" stroke="#8c8c9c" />
    <path d={flip ? 'M5 11.500h12M11.500 6l5.500 5.500-5.500 5.500' : 'M18 11.500H6M11.500 6L6 11.500l5.500 5.500'} fill="none" stroke="#fff" strokeWidth="2.400" />
  </svg>
);

export default function App() {
  return (
    <Desktop>
      <Global />
      <Defs />
      <IconGrid>
        {shortcuts.map(([icon, label, col, row]) => (
          <Shortcut key={`${col}-${row}`} $col={col} $row={row} $start={icon === 'news'}>
            {art[icon]}
            <span><T>{label}</T></span>
          </Shortcut>
        ))}
      </IconGrid>

      <BehindEdge />

      <Explorer>
        <Caption>
          <SmallFolder />
          <CaptionText>MP3</CaptionText>
          <CaptionButton aria-label="最小化">
            <svg width="13" height="13" viewBox="0 0 13 13"><path d="M2 10.500h7" stroke="#25234f" strokeWidth="3" /></svg>
          </CaptionButton>
          <CaptionButton aria-label="最大化">
            <svg width="13" height="13" viewBox="0 0 13 13"><path d="M1.500 2v9.500h10V2M1 2.500h11" fill="none" stroke="#34325e" strokeWidth="1.400" /></svg>
          </CaptionButton>
          <CaptionButton aria-label="關閉">
            <svg width="13" height="13" viewBox="0 0 13 13"><path d="M1.500 1.500l10 10M11.500 1.500l-10 10" stroke="#fff" strokeWidth="2.400" /></svg>
          </CaptionButton>
        </Caption>

        <Frame>
          <MenuBar>
            {menus.map(([name, key]) => (
              <MenuButton key={key}><T>{name}</T>(<u>{key}</u>)</MenuButton>
            ))}
            <FlagBox>
              <svg width="20" height="18" viewBox="0 0 20 18" aria-hidden="true">
                <path d="M4 2q4-2 6.500 0L9 8Q6 6.500 2.500 8z" fill="#e8602c" />
                <path d="M11.500 2.500q4 2 7.500 0L17.500 9q-4 1.500-7.500-.5z" fill="#74b82c" />
                <path d="M2.200 9.500Q5.500 8 8.500 9.500L7 16Q4 14 .5 15.500z" fill="#3c8ce0" />
                <path d="M9.700 10q4 2 7.500.5L15.500 17q-4 1.500-7.500-.5z" fill="#f8b820" />
              </svg>
            </FlagBox>
          </MenuBar>

          <ToolBar>
            <Tool $off $w={93}><RoundArrow /><span><T>上一頁</T></span></Tool>
            <Tool $off $w={48} aria-label="下一頁"><RoundArrow flip /></Tool>
            <Tool $w={28} aria-label="往上">
              <svg width="22" height="24" viewBox="0 0 22 24" aria-hidden="true">
                <path d="M2 9l5-1 2 2 10-1-2 11-14 3z" fill="url(#gFolder)" stroke="#c89c30" />
                <path d="M9 20q5-3 3-12H8l6-7 6 7h-4q1 10-7 14z" fill="#38b038" stroke="#146c18" strokeWidth=".8" />
              </svg>
            </Tool>
            <Divider />
            <Tool $w={63}>
              <svg width="23" height="24" viewBox="0 0 23 24" aria-hidden="true">
                <path d="M1.500 22l8-8" stroke="#b87840" strokeWidth="4" />
                <circle cx="15" cy="8.500" r="7" fill="#c8ecff" stroke="#88a0c0" strokeWidth="1.600" />
                <path d="M11 7q2-3 5-3" stroke="#fff" strokeWidth="2" fill="none" />
              </svg>
              <span><T>搜尋</T></span>
            </Tool>
            <Tool $w={73}>
              <svg width="23" height="22" viewBox="0 0 23 22" aria-hidden="true">
                <path d="M1 3l5-2 2 2 6 0v12L2 18z" fill="url(#gFolder)" stroke="#c89c30" />
                <path d="M7 9l5-2 2 1 6 0-1 4-12 8z" fill="url(#gFolderBack)" />
                <path d="M5 20l4-8 13-2-4 9z" fill="url(#gFolder)" stroke="#c89c30" />
              </svg>
              <span><T>資料夾</T></span>
            </Tool>
            <Divider />
            <Tool $w={32} aria-label="檢視">
              <svg width="32" height="20" viewBox="0 0 32 20" aria-hidden="true">
                <rect x=".7" y=".7" width="21.600" height="18.600" fill="#fff" stroke="#1c64c0" strokeWidth="1.400" />
                <rect width="23" height="4" fill="#1c64c0" />
                <path d="M4 8h3" stroke="#b0a8c0" strokeWidth="3" />
                <path d="M4 13.500h3" stroke="#e88850" strokeWidth="3" />
                <path d="M10 8h3M10 13.500h3" stroke="#2848b0" strokeWidth="3" />
                <path d="M16 8h3" stroke="#389838" strokeWidth="3" />
                <path d="M16 13.500h3" stroke="#d0b020" strokeWidth="3" />
                <path d="M26 8.500h6l-3 3z" fill="#000" />
              </svg>
            </Tool>
          </ToolBar>

          <AddressBar onSubmit={e => e.preventDefault()}>
            <label htmlFor="address"><T>網址</T>(<u>D</u>)</label>
            <AddressBox>
              <SmallFolder />
              <input id="address" defaultValue="I:\MP3" />
              <ScrollButton type="button" aria-label="開啟清單"><Chevron dir="down" /></ScrollButton>
            </AddressBox>
            <GoButton>
              <svg width="19" height="19" viewBox="0 0 19 19" aria-hidden="true">
                <rect x=".5" y=".5" width="18" height="18" rx="2" fill="url(#gGo)" stroke="#d8f0d8" />
                <path d="M4 9.500h10M9.500 5l4.500 4.500L9.500 14" fill="none" stroke="#fff" strokeWidth="2" />
              </svg>
              <span><T>移至</T></span>
            </GoButton>
          </AddressBar>

          <Body>
            <TaskPane>
              <TaskPanel main title="音樂工作" items={[['play', '播放所有曲目'], ['shop', '線上購買音樂']]} />
              <TaskPanel
                title="檔案及資料夾工作"
                items={[
                  ['rename', '將這個檔案重新命名'],
                  ['move', '移動這個檔案'],
                  ['copy', '複製這個檔案'],
                  ['mail', '以電子郵件傳送這個檔案'],
                  ['remove', '刪除這個檔案'],
                ]}
              />
              <TaskPanel
                title="其他位置"
                items={[['disk', '新增磁碟區 (I:)'], ['music', 'My Music'], ['pc', '我的電腦'], ['net', '網路上的芳鄰']]}
              />
              <TaskPanel title="詳細資料">
                <Details>絢香 &amp; コブクロ - Winding Road.mp3</Details>
              </TaskPanel>
            </TaskPane>

            <ScrollBar>
              <ScrollButton aria-label="向上捲動"><Chevron dir="up" /></ScrollButton>
              <SideThumb />
              <Space />
              <ScrollButton aria-label="向下捲動"><Chevron dir="down" /></ScrollButton>
            </ScrollBar>

            <ListPane>
              <ListRow>
                <ListView>
                  <ListMark><Note w={130} h={146} fill="url(#gPaleNote)" /></ListMark>
                  <Files>
                    <colgroup>
                      <col />
                      <col width="96" />
                      <col width="108" />
                    </colgroup>
                    <thead>
                      <tr>
                        <th>
                          <T>名稱</T>
                          <SortMark width="10" height="5" viewBox="0 0 10 5" aria-hidden="true">
                            <path d="M0 5l5-5 5 5z" fill="#6462a0" />
                          </SortMark>
                        </th>
                        <th className="size"><T>大小</T></th>
                        <th><T>類型</T></th>
                      </tr>
                    </thead>
                    <tbody>
                      {files.map(([name, size, kind], i) => {
                        const on = name.startsWith('絢香');
                        const real = /\.(ra|rmvb)$/.test(name);
                        return (
                          <tr key={i}>
                            <td>
                              <NameCell>
                                <IconSlot $on={on}>{small[real ? 'real' : 'audio']}</IconSlot>
                                <FileName $on={on}><T>{name}</T></FileName>
                              </NameCell>
                            </td>
                            <td className="size">{size} KB</td>
                            <td><T>{kind}</T></td>
                          </tr>
                        );
                      })}
                    </tbody>
                  </Files>
                </ListView>
                <ScrollBar>
                  <ScrollButton aria-label="清單向上"><Chevron dir="up" /></ScrollButton>
                  <Space />
                  <ListThumb><Grip /></ListThumb>
                  <ScrollButton aria-label="清單向下"><Chevron dir="down" /></ScrollButton>
                </ScrollBar>
              </ListRow>
              <HBar>
                <HScroll $h>
                  <ScrollButton aria-label="向左捲動"><Chevron dir="left" /></ScrollButton>
                  <WideThumb><Grip turn /></WideThumb>
                  <Space />
                  <ScrollButton aria-label="向右捲動"><Chevron dir="right" /></ScrollButton>
                </HScroll>
                <Corner>
                  <svg width="12" height="12" viewBox="0 0 12 12" aria-hidden="true">
                    <path d="M9 1h2v2H9zM5 5h2v2H5zM9 5h2v2H9zM1 9h2v2H1zM5 9h2v2H5zM9 9h2v2H9z" fill="#a3a1c4" />
                  </svg>
                </Corner>
              </HBar>
            </ListPane>
          </Body>
        </Frame>
      </Explorer>

      <Dialog role="alertdialog" aria-labelledby="error-title">
        <DialogTitle>
          <h2 id="error-title"><T size={17}>SRSSSC.exe - 無法找到輸入點</T></h2>
          <CloseButton aria-label="關閉訊息">
            <svg width="9" height="9" viewBox="0 0 9 9"><path d="M1 1l7 7M8 1L1 8" stroke="#000" strokeWidth="2.200" /></svg>
          </CloseButton>
        </DialogTitle>
        <Message>
          <svg width="33" height="33" viewBox="0 0 33 33" aria-hidden="true">
            <circle cx="17" cy="17" r="15.500" fill="#6c6480" opacity=".6" />
            <circle cx="16" cy="16" r="15.500" fill="url(#gRed)" />
            <path d="M9.500 9.500l13 13M22.500 9.500l-13 13" stroke="#fff" strokeWidth="4.400" />
          </svg>
          <p><T>無法找到程序輸入點 GetAddrInfoW (在動態連結程式庫 WS2_32.dll)。</T></p>
        </Message>
        <OkButton><T>確定</T></OkButton>
      </Dialog>
    </Desktop>
  );
}
